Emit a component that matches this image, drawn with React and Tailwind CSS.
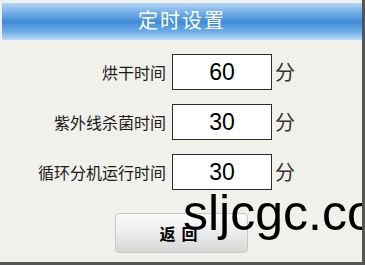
import React from "react";

const cjk = "font-['Noto_Sans_CJK_SC','Noto_Sans',sans-serif]";
const num = "font-['Liberation_Sans',Arial,sans-serif]";

function Row({ label, value }) {
  return (
    <div className="flex items-center h-[36px]">
      <div className={`w-[166px] text-right text-[16px] leading-none text-[#1a1a1a] ${cjk}`}>
        {label}
      </div>
      <div
        className={`ml-[6px] w-[100px] h-[36px] bg-white border border-[#2a2a2a] flex items-center justify-center text-[23px] text-black ${num}`}
      >
        {value}
      </div>
      <div className={`ml-[3px] text-[20px] leading-none text-[#333] ${cjk}`}>分</div>
    </div>
  );
}

export default function App() {
  return (
    <div className="relative w-[365px] h-[265px] overflow-hidden bg-[#f1f1ec] border-r-[3px] border-b-[3px] border-[#555]">
      <div className="pt-[3px] pl-[2px]">
        <div
          className={`h-[37px] pb-[3px] flex items-center justify-center text-white text-[20px] tracking-[2px] bg-[linear-gradient(to_bottom,#b2d5f5_0%,#6aa8e4_30%,#418cd7_52%,#6eaee8_78%,#b9dbf7_100%)] ${cjk}`}
        >
          定时设置
        </div>
      </div>
      <div className="flex flex-col gap-[14px] mt-[14px]">
        <Row label="烘干时间" value="60" />
        <Row label="紫外线杀菌时间" value="30" />
        <Row label="循环分机运行时间" value="30" />
      </div>
      <div className="mt-[23px] ml-[115px] w-[133px] h-[40px] rounded-[4px] border border-[#c8c8c8] bg-[linear-gradient(to_bottom,#fafafa_0%,#ececec_50%,#d6d6d6_100%)] flex items-center justify-center">
        <span className={`text-[16px] font-bold text-black tracking-[6px] ${cjk}`}>返回</span>
      </div>
      <div
        className={`absolute left-[183px] top-[188px] text-[50px] leading-none text-black whitespace-nowrap ${num}`}
      >
        sljcgc.com
      </div>
    </div>
  );
}
